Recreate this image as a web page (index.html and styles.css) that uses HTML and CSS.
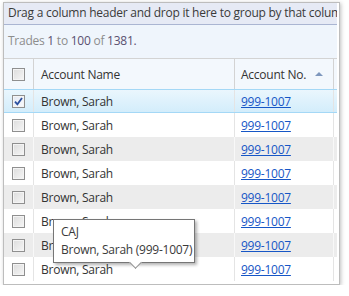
FILE: index.html
```html
<!DOCTYPE html>
<html lang="en">
<head>
    <meta charset="UTF-8">
    <title>Trades</title>
    <link rel="stylesheet" href="styles.css">
</head>
<body>

<div class="grid-frame">
    <div class="group-panel">Drag a column header and drop it here to group by that column</div>
    <div class="pager">Trades <b>1</b> to <b>100</b> of <b>1381.</b></div>

    <div class="grid-row grid-header">
        <div class="cell cell-check"><span class="check"></span></div>
        <div class="cell cell-name">Account Name</div>
        <div class="cell cell-no">Account No. <span class="sort-up"></span></div>
    </div>

    <div class="grid-row selected">
        <div class="cell cell-check">
            <span class="check checked">
                <svg width="9" height="9" viewBox="0 0 9 9"><path d="M1 4.6 L3.4 7.4 L8 1" fill="none" stroke="#2b4f9e" stroke-width="1.8"/></svg>
            </span>
        </div>
        <div class="cell cell-name">Brown, Sarah</div>
        <div class="cell cell-no"><a href="#">999-1007</a></div>
    </div>
    <div class="grid-row">
        <div class="cell cell-check"><span class="check"></span></div>
        <div class="cell cell-name">Brown, Sarah</div>
        <div class="cell cell-no"><a href="#">999-1007</a></div>
    </div>
    <div class="grid-row alt">
        <div class="cell cell-check"><span class="check"></span></div>
        <div class="cell cell-name">Brown, Sarah</div>
        <div class="cell cell-no"><a href="#">999-1007</a></div>
    </div>
    <div class="grid-row">
        <div class="cell cell-check"><span class="check"></span></div>
        <div class="cell cell-name">Brown, Sarah</div>
        <div class="cell cell-no"><a href="#">999-1007</a></div>
    </div>
    <div class="grid-row alt">
        <div class="cell cell-check"><span class="check"></span></div>
        <div class="cell cell-name">Brown, Sarah</div>
        <div class="cell cell-no"><a href="#">999-1007</a></div>
    </div>
    <div class="grid-row">
        <div class="cell cell-check"><span class="check"></span></div>
        <div class="cell cell-name">Brown, Sarah</div>
        <div class="cell cell-no"><a href="#">999-1007</a></div>
    </div>
    <div class="grid-row alt">
        <div class="cell cell-check"><span class="check"></span></div>
        <div class="cell cell-name">Brown, Sarah</div>
        <div class="cell cell-no"><a href="#">999-1007</a></div>
    </div>
    <div class="grid-row">
        <div class="cell cell-check"><span class="check"></span></div>
        <div class="cell cell-name">Brown, Sarah</div>
        <div class="cell cell-no"><a href="#">999-1007</a></div>
    </div>
    <div class="grid-bottom"></div>

    <!-- tooltip over the name cell -->
    <div class="tooltip">
        <div>CAJ</div>
        <div>Brown, Sarah (999-1007)</div>
    </div>
</div>

</body>
</html>
```

FILE: styles.css
```css
body {
    margin: 0;
    padding: 2px 0 0 3px;
    font-family: 'Segoe UI', 'Open Sans', sans-serif;
    font-size: 12px;
    letter-spacing: -0.25px;
    color: #333;
    background-color: #fff;
}
.grid-frame {
    position: relative;
    width: 333px;
    padding-right: 2px;
    border: 1px solid #bdbdbd;
    box-shadow: 1px 1px 4px rgba(0, 0, 0, 0.25);
    background-color: #fff;
}
.group-panel {
    height: 21px;
    line-height: 20px;
    padding-left: 4px;
    white-space: nowrap;
    overflow: hidden;
    color: #3a3a3a;
    background-color: #e6eaf5;
    border-bottom: 1px solid #aab5d2;
}
.pager {
    height: 33px;
    line-height: 31px;
    padding-left: 4px;
    color: #8d8d8d;
    background-color: #eff5fc;
}
.pager b {
    font-weight: normal;
    color: #5a5070;
}
.grid-row {
    display: flex;
    height: 24px;
}
.grid-header {
    height: 30px;
    border-top: 1px solid #d3d3d3;
    background-color: #f3f8fd;
}
.grid-header .cell {
    border-right-color: #d3d3d3;
}
.cell {
    display: flex;
    align-items: center;
    border-right: 1px solid #e4e4e4;
    white-space: nowrap;
}
.cell-check {
    width: 29px;
    justify-content: center;
}
.cell-name {
    width: 193px;
    padding-left: 7px;
}
.cell-no {
    width: 92px;
    padding-left: 6px;
    margin-right: 2px;
}
.grid-row.alt {
    background-color: #ececec;
}
.grid-row.alt .cell {
    border-right-color: #f8f8f8;
}
.grid-row.selected {
    height: 22px;
    border-top: 1px solid #a4d8f6;
    border-bottom: 1px solid #a4d8f6;
    background: linear-gradient(#eaf6fd, #d3edfb);
}
.check {
    box-sizing: border-box;
    width: 13px;
    height: 13px;
    border: 1px solid #8f8f8f;
    background: linear-gradient(135deg, #dcdcdc, #f6f6f6);
    box-shadow: inset 0 0 0 1px #f4f4f4;
    display: flex;
    align-items: center;
    justify-content: center;
}
.check.checked {
    background: linear-gradient(135deg, #e2e8f2, #fafbfd);
}
.sort-up {
    display: inline-block;
    margin-left: 9px;
    width: 0;
    height: 0;
    border-left: 4px solid transparent;
    border-right: 4px solid transparent;
    border-bottom: 4px solid #7e97bd;
}
a {
    color: #1656c6;
    text-decoration: underline;
}
.grid-bottom {
    height: 3px;
}
.tooltip {
    position: absolute;
    left: 49px;
    top: 216px;
    width: 127px;
    padding: 3px 6px 3px 7px;
    line-height: 18px;
    white-space: nowrap;
    background-color: #fff;
    border: 1px solid #767676;
    box-shadow: 2px 2px 3px rgba(0, 0, 0, 0.3);
    color: #3a3a3a;
}
.tooltip::after {
    content: '';
    position: absolute;
    left: 77px;
    bottom: -5px;
    width: 8px;
    height: 8px;
    background-color: #fff;
    border-right: 1px solid #8a8a8a;
    border-bottom: 1px solid #8a8a8a;
    transform: rotate(45deg);
}
```
